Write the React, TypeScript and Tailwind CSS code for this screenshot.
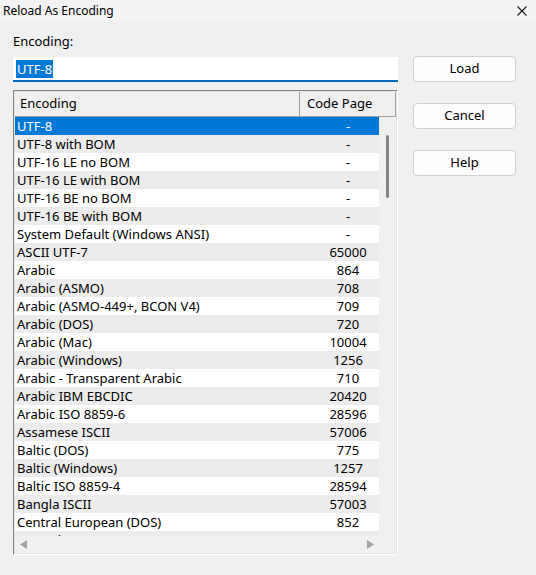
import React from 'react';

const rows: [string, string][] = [
  ['UTF-8', '-'],
  ['UTF-8 with BOM', '-'],
  ['UTF-16 LE no BOM', '-'],
  ['UTF-16 LE with BOM', '-'],
  ['UTF-16 BE no BOM', '-'],
  ['UTF-16 BE with BOM', '-'],
  ['System Default (Windows ANSI)', '-'],
  ['ASCII UTF-7', '65000'],
  ['Arabic', '864'],
  ['Arabic (ASMO)', '708'],
  ['Arabic (ASMO-449+, BCON V4)', '709'],
  ['Arabic (DOS)', '720'],
  ['Arabic (Mac)', '10004'],
  ['Arabic (Windows)', '1256'],
  ['Arabic - Transparent Arabic', '710'],
  ['Arabic IBM EBCDIC', '20420'],
  ['Arabic ISO 8859-6', '28596'],
  ['Assamese ISCII', '57006'],
  ['Baltic (DOS)', '775'],
  ['Baltic (Windows)', '1257'],
  ['Baltic ISO 8859-4', '28594'],
  ['Bangla ISCII', '57003'],
  ['Central European (DOS)', '852'],
  ['Central European (ISO)', '28592'],
];

const font = { fontFamily: '"Noto Sans", "Liberation Sans", sans-serif' };

function Button({ label }: { label: string }) {
  return (
    <button className="h-[26px] w-[103px] rounded-[4px] border border-[#d0d0d0] bg-[#fdfdfd] text-[13px] text-black">
      {label}
    </button>
  );
}

export default function App() {
  return (
    <div className="w-[536px] h-[575px] bg-[#f0f0f0] text-black overflow-hidden" style={font}>
      {/* Title bar */}
      <div className="h-[22px] bg-[#f3f3f3] flex items-center justify-between pl-[3px] pr-[9px]">
        <span className="text-[12px] leading-none">Reload As Encoding</span>
        <svg width="10" height="10" viewBox="0 0 10 10" stroke="#1a1a1a" strokeWidth="1.1">
          <path d="M0.5 0.5 L9.5 9.5 M9.5 0.5 L0.5 9.5" />
        </svg>
      </div>

      <div className="flex pl-[13px] pt-[12px]">
        {/* Left column */}
        <div className="w-[385px] flex flex-col">
          <div className="text-[13px] leading-[14px] h-[23px]">Encoding:</div>
          <div className="h-[25px] bg-white border-b-2 border-[#0067c0] flex items-center px-[3px]">
            <span className="bg-[#0078d7] text-white text-[13px] leading-[18px] px-[1px]">UTF-8</span>
          </div>

          {/* List view */}
          <div className="mt-[8px] h-[465px] border border-t-[#828282] border-l-[#828282] border-r-white border-b-white">
            <div className="h-full border border-[#e3e3e3] bg-white flex flex-col overflow-hidden">
              {/* Header */}
              <div className="flex h-[25px] shrink-0 bg-[#f0f0f0] border-b border-[#a0a0a0] text-[13px]">
                <div className="w-[285px] shrink-0 border-r border-[#a0a0a0] pl-[5px] flex items-center">Encoding</div>
                <div className="w-[96px] shrink-0 border-r border-[#a0a0a0] pl-[7px] flex items-center">Code Page</div>
              </div>
              <div className="flex-1 flex min-h-0">
                <div className="flex-1 overflow-hidden min-w-0">
                  {rows.map(([name, cp], i) => (
                    <div
                      key={name}
                      className={`flex h-[18px] w-[382px] text-[13px] leading-[18px] ${
                        i === 0 ? 'bg-[#0078d7] text-white' : i % 2 === 1 ? 'bg-[#ececec]' : 'bg-white'
                      }`}
                    >
                      <div className="w-[284px] shrink-0 pl-[2px] whitespace-nowrap">{name}</div>
                      <div className="w-[98px] shrink-0 text-center">{cp}</div>
                    </div>
                  ))}
                </div>
                {/* Vertical scrollbar */}
                <div className="w-[17px] shrink-0 bg-[#f0f0f0] pt-[18px] pl-[7px]">
                  <div className="w-[3px] h-[63px] rounded-full bg-[#858585]" />
                </div>
              </div>
              {/* Horizontal scrollbar */}
              <div className="h-[17px] shrink-0 flex bg-[#f0f0f0]">
                <div className="flex-1 flex items-center justify-between px-[5px]">
                  <svg width="7" height="9" viewBox="0 0 7 9"><path d="M7 0 L0 4.5 L7 9 Z" fill="#a3a3a3" /></svg>
                  <svg width="7" height="9" viewBox="0 0 7 9"><path d="M0 0 L7 4.5 L0 9 Z" fill="#a3a3a3" /></svg>
                </div>
                <div className="w-[17px] bg-[#f0f0f0]" />
              </div>
            </div>
          </div>
        </div>

        {/* Buttons */}
        <div className="ml-[15px] mt-[22px] flex flex-col gap-[21px]">
          <Button label="Load" />
          <Button label="Cancel" />
          <Button label="Help" />
        </div>
      </div>
    </div>
  );
}
